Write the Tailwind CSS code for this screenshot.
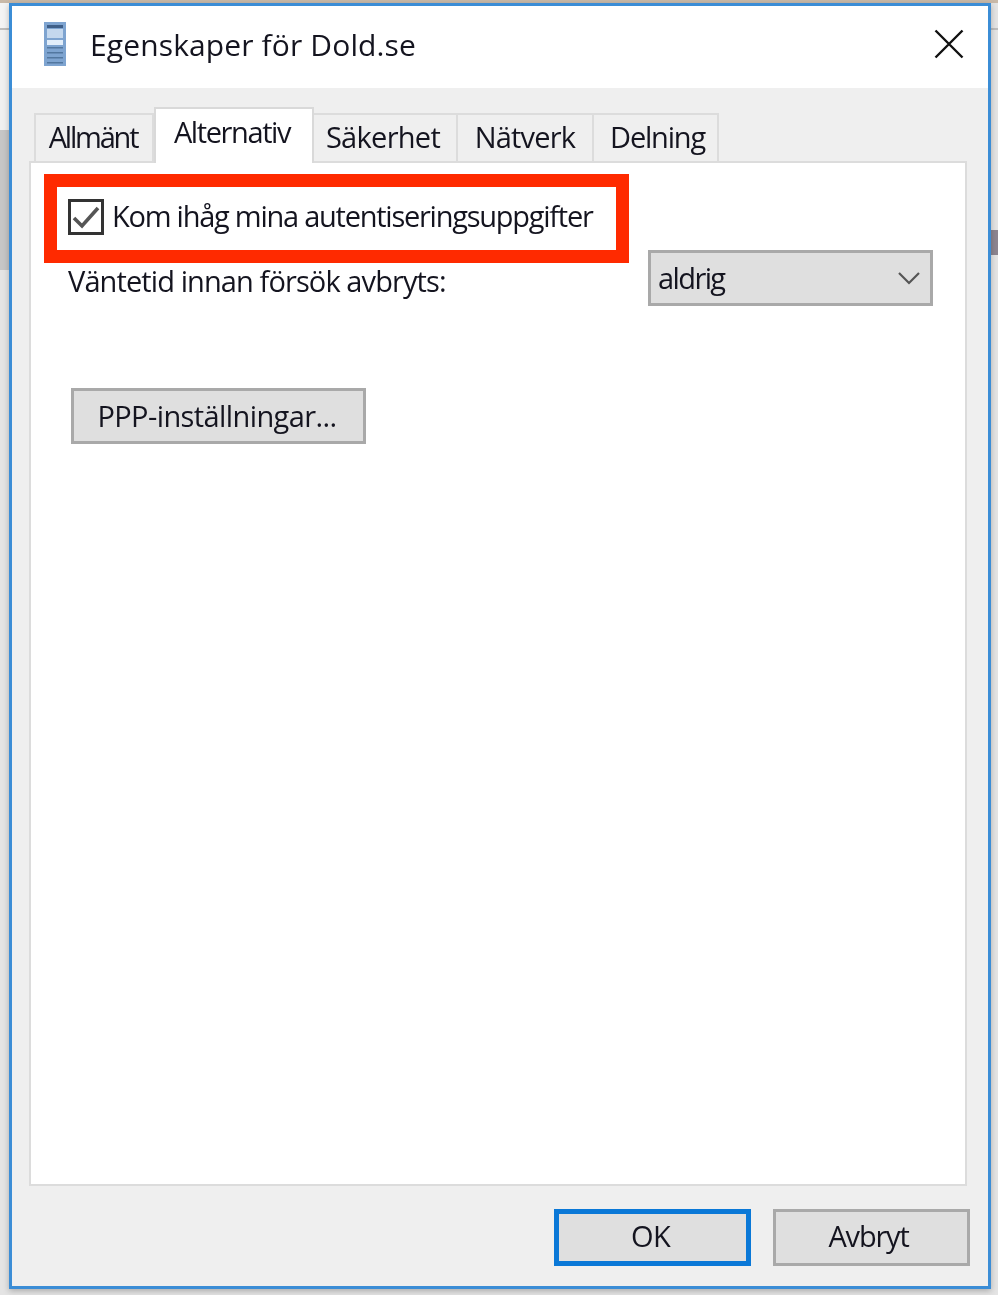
<!DOCTYPE html>
<html lang="sv">
<head>
<meta charset="utf-8">
<script src="https://cdn.jsdelivr.net/npm/@tailwindcss/browser@4"></script>
</head>
<body class="m-0 overflow-hidden">
<div class="relative w-[998px] h-[1295px] bg-[#e4e4e4] overflow-hidden blur-[0.5px] font-['Open_Sans','Noto_Sans',sans-serif] text-[#14141f]">
  <!-- desktop behind the window -->
  <div class="absolute left-0 top-0 w-full h-[3px] bg-[#c9b9a8]"></div>
  <div class="absolute left-0 top-[3px] w-[10px] h-[25px] bg-[#f4f4f4]"></div>
  <div class="absolute left-0 top-[28px] w-[10px] h-[2px] bg-[#bdbdbd]"></div>
  <div class="absolute left-0 top-[30px] w-[10px] h-[100px] bg-[#f0f0f0]"></div>
  <div class="absolute left-0 top-[130px] w-[10px] h-[140px] bg-[#c6c6c6]"></div>
  <div class="absolute right-0 top-[28px] w-[8px] h-[2px] bg-[#bdbdbd]"></div>
  <div class="absolute right-0 top-[230px] w-[8px] h-[25px] bg-[#8d8590]"></div>

  <!-- window -->
  <div class="absolute left-[9px] top-[3px] w-[982px] h-[1286px] border-[3px] border-[#3b8dd6] bg-[#efefef] flex flex-col shadow-[0_2px_6px_rgba(0,0,0,0.25)]">
    <!-- title bar -->
    <div class="h-[82px] shrink-0 bg-white flex items-center pl-[32px] pr-[24px]">
      <svg class="w-[23px] h-[44px] shrink-0 -mt-[6px]" viewBox="0 0 23 44">
        <rect x="0" y="0" width="22" height="44" fill="#7ea4d0"/>
        <rect x="3" y="3" width="16" height="3" fill="#3f5f88"/>
        <rect x="3" y="7" width="16" height="9" fill="#c4d8ee"/>
        <rect x="3" y="18" width="16" height="5" fill="#e2eefa"/>
        <rect x="3" y="25" width="16" height="1.5" fill="#52779f"/>
        <rect x="3" y="30" width="16" height="1.5" fill="#52779f"/>
        <rect x="3" y="35" width="16" height="1.5" fill="#52779f"/>
        <rect x="3" y="40" width="16" height="1.5" fill="#52779f"/>
      </svg>
      <div class="ml-[23px] text-[30px] leading-none -mt-[4px] tracking-[0.13px] whitespace-nowrap">Egenskaper för Dold.se</div>
      <svg class="ml-auto w-[30px] h-[30px] -mt-[6px]" viewBox="0 0 30 30" fill="none" stroke="#111" stroke-width="2.4">
        <path d="M1.5 1.5 L28.5 28.5 M28.5 1.5 L1.5 28.5"/>
      </svg>
    </div>

    <!-- body -->
    <div class="flex-1 flex flex-col px-[17px] pt-[19px]">
      <!-- tabs -->
      <div class="relative z-10 flex items-end h-[56px] pl-[5px] -mb-[2px] text-[29px]">
        <div class="w-[120px] h-[50px] border-2 border-b-0 border-[#dcdcdc] flex items-center justify-center pb-[4px] pr-[2px] tracking-[-2.2px]">Allmänt</div>
        <div class="w-[160px] h-[56px] bg-white border-2 border-b-0 border-[#d9d9d9] flex items-center justify-center pb-[9px] pr-[4px] tracking-[-1.4px]">Alternativ</div>
        <div class="w-[144px] h-[50px] border-2 border-l-0 border-b-0 border-[#dcdcdc] flex items-center justify-center pb-[4px] pr-[4px] tracking-[-0.7px]">Säkerhet</div>
        <div class="w-[136px] h-[50px] border-2 border-l-0 border-b-0 border-[#dcdcdc] flex items-center justify-center pb-[4px] tracking-[-0.8px]">Nätverk</div>
        <div class="w-[125px] h-[50px] border-2 border-l-0 border-b-0 border-[#dcdcdc] flex items-center justify-center pb-[4px] pl-[4px] tracking-[-1.2px]">Delning</div>
      </div>
      <!-- panel -->
      <div class="w-[938px] h-[1025px] bg-white border-2 border-[#dcdcdc] flex flex-col">
        <!-- highlighted checkbox row -->
        <div class="relative h-[116px] shrink-0">
          <div class="absolute left-[13px] top-[11px] w-[585px] h-[89px] border-[13px] border-[#ff2a00]"></div>
          <div class="absolute left-[37px] top-[36px] flex items-center">
            <svg class="w-[36px] h-[36px] shrink-0" viewBox="0 0 36 36" fill="none">
              <rect x="1.5" y="1.5" width="33" height="33" stroke="#333" stroke-width="3"/>
              <path d="M6 19 L14 27 L30 9" stroke="#555" stroke-width="3.6"/>
            </svg>
            <span class="ml-[8px] text-[29px] leading-none tracking-[-1.25px] whitespace-nowrap -mt-[3px]">Kom ihåg mina autentiseringsuppgifter</span>
          </div>
          <div class="absolute left-[37px] top-[103px] text-[29px] leading-none tracking-[-0.9px] whitespace-nowrap">Väntetid innan försök avbryts:</div>
          <div class="absolute left-[617px] top-[87px] w-[285px] h-[56px] bg-[#dfdfdf] border-[3px] border-[#a9a9a9] flex items-center pl-[7px] pr-[10px] text-[29px] tracking-[-1.6px]">
            <span>aldrig</span>
            <svg class="ml-auto w-[22px] h-[13px]" viewBox="0 0 22 13" fill="none" stroke="#555" stroke-width="2.2"><path d="M1 1 L11 11 L21 1"/></svg>
          </div>
        </div>
        <div class="ml-[40px] mt-[109px] w-[295px] h-[56px] bg-[#dfdfdf] border-[3px] border-[#a9a9a9] flex items-center justify-center pr-[3px] text-[29px] tracking-[-0.6px]">
          <span>PPP-inställningar...</span>
        </div>
      </div>
      <!-- footer buttons -->
      <div class="flex justify-end gap-[22px] mt-[23px] mr-[1px] text-[29px]">
        <div class="w-[197px] h-[57px] bg-[#dfdfdf] border-[5px] border-[#0a78d7] flex items-center justify-center pr-[4px] tracking-[-0.6px]"><span class="-mt-[3px]">OK</span></div>
        <div class="w-[197px] h-[57px] bg-[#dfdfdf] border-[3px] border-[#a9a9a9] flex items-center justify-center pr-[6px] tracking-[-1.2px]"><span class="-mt-[3px]">Avbryt</span></div>
      </div>
    </div>
  </div>
</div>
</body>
</html>
